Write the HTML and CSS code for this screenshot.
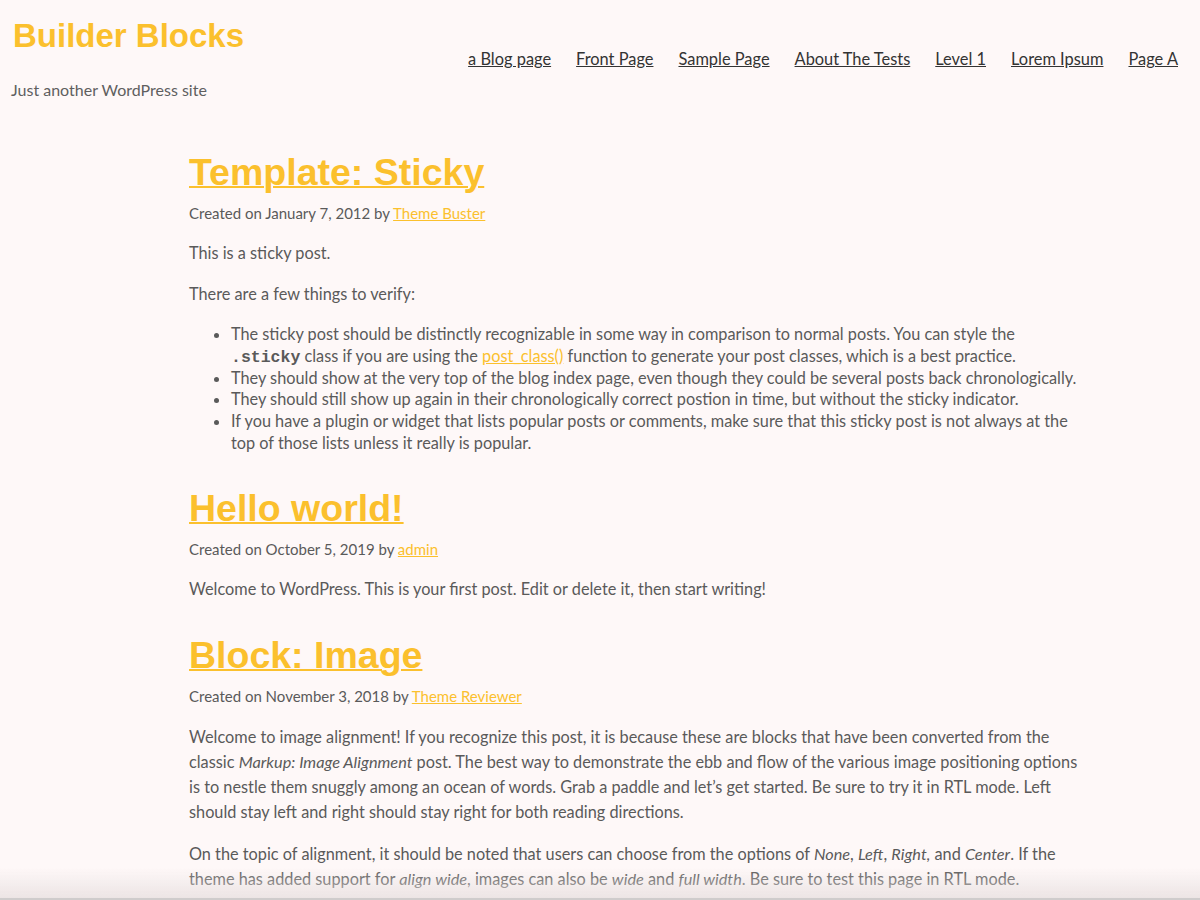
FILE: index.html
```html
<!DOCTYPE html>
<html lang="en">
<head>
<meta charset="utf-8">
<title>Builder Blocks</title>
<link rel="stylesheet" href="styles.css">
</head>
<body>
<header class="site-header">
  <div class="branding">
    <div class="site-title">Builder Blocks</div>
    <div class="tagline">Just another WordPress site</div>
  </div>
  <nav class="main-nav">
    <a href="#">a Blog page</a>
    <a href="#">Front Page</a>
    <a href="#">Sample Page</a>
    <a href="#">About The Tests</a>
    <a href="#">Level 1</a>
    <a href="#">Lorem Ipsum</a>
    <a href="#">Page A</a>
  </nav>
</header>
<main class="content">
  <article class="post">
    <h2 class="post-title"><a href="#">Template: Sticky</a></h2>
    <div class="meta">Created on January 7, 2012 by <a href="#">Theme Buster</a></div>
    <p>This is a sticky post.</p>
    <p>There are a few things to verify:</p>
    <ul class="list">
      <li>The sticky post should be distinctly recognizable in some way in comparison to normal posts. You can style the <code>.sticky</code> class if you are using the <a href="#">post_class()</a> function to generate your post classes, which is a best practice.</li>
      <li>They should show at the very top of the blog index page, even though they could be several posts back chronologically.</li>
      <li>They should still show up again in their chronologically correct postion in time, but without the sticky indicator.</li>
      <li>If you have a plugin or widget that lists popular posts or comments, make sure that this sticky post is not always at the top of those lists unless it really is popular.</li>
    </ul>
  </article>
  <article class="post">
    <h2 class="post-title"><a href="#">Hello world!</a></h2>
    <div class="meta">Created on October 5, 2019 by <a href="#">admin</a></div>
    <p>Welcome to WordPress. This is your first post. Edit or delete it, then start writing!</p>
  </article>
  <article class="post">
    <h2 class="post-title"><a href="#">Block: Image</a></h2>
    <div class="meta">Created on November 3, 2018 by <a href="#">Theme Reviewer</a></div>
    <p class="long">Welcome to image alignment! If you recognize this post, it is because these are blocks that have been converted from the classic <em>Markup: Image Alignment</em> post. The best way to demonstrate the ebb and flow of the various image positioning options is to nestle them snuggly among an ocean of words. Grab a paddle and let’s get started. Be sure to try it in RTL mode. Left should stay left and right should stay right for both reading directions.</p>
    <p class="long">On the topic of alignment, it should be noted that users can choose from the options of <em>None</em>, <em>Left</em>, <em>Right,</em> and <em>Center</em>. If the theme has added support for <em>align wide</em>, images can also be <em>wide</em> and <em>full width</em>. Be sure to test this page in RTL mode.</p>
  </article>
</main>
<div class="bottom-shade"></div>
</body>
</html>
```

FILE: styles.css
```css
html, body {
  margin: 0;
  padding: 0;
  background: #fef8f8;
}
body {
  font-family: Lato, "Open Sans", sans-serif;
  font-size: 16.3px;
  color: #5a5a5a;
}
a {
  color: #fbc02d;
}
.site-header {
  display: flex;
  justify-content: space-between;
  align-items: flex-start;
  padding: 16px 22px 0 11px;
}
.site-title {
  font-family: "Liberation Sans", Arial, sans-serif;
  font-weight: bold;
  font-size: 33px;
  line-height: 40px;
  color: #fbc02d;
  padding-left: 2px;
}
.tagline {
  margin-top: 24px;
  font-size: 16px;
  line-height: 20px;
  color: #5f5f5f;
}
.main-nav {
  display: flex;
  gap: 25px;
  margin-top: 32px;
}
.main-nav a {
  color: #333;
  font-size: 16.4px;
  line-height: 22px;
}
.content {
  margin: 50px 0 0 189px;
  width: 890px;
}
.post {
  margin-bottom: 32px;
}
.post-title {
  font-family: "Liberation Sans", Arial, sans-serif;
  font-size: 37.5px;
  line-height: 44px;
  font-weight: bold;
  margin: 0;
}
.post-title a {
  color: #fbc02d;
  text-decoration-thickness: 2px;
}
.meta {
  margin-top: 8px;
  font-size: 15px;
  line-height: 22px;
}
p {
  margin: 17px 0 0;
  line-height: 24px;
}
p.long {
  line-height: 25px;
}
.list {
  margin: 17px 0 0;
  padding-left: 42px;
  line-height: 21.8px;
}
code {
  font-family: "Liberation Mono", "Courier New", monospace;
  font-weight: bold;
  font-size: 16.5px;
  line-height: 1;
}
.bottom-shade {
  position: fixed;
  left: 0;
  right: 0;
  bottom: 0;
  height: 30px;
  background: linear-gradient(rgba(230, 222, 222, 0), rgba(230, 222, 222, 0.75));
  border-bottom: 2px solid #cfcccc;
}
```
